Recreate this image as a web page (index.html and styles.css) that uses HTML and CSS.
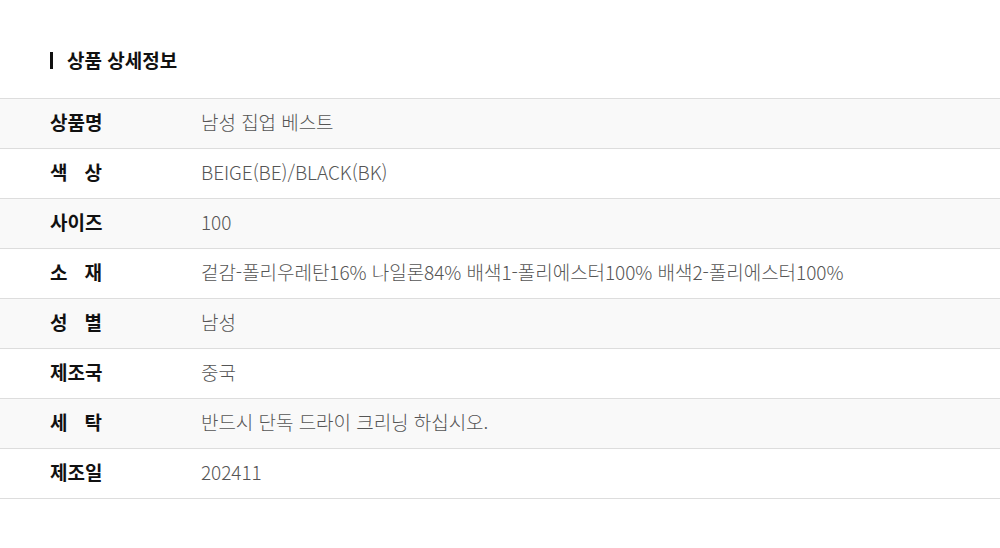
FILE: index.html
```html
<!DOCTYPE html>
<html lang="ko">
<head>
    <meta charset="UTF-8">
    <meta name="viewport" content="width=device-width, initial-scale=1.0">
    <title>상품 상세정보</title>
    <link rel="stylesheet" href="styles.css">
</head>
<body>
    <div class="detail-info">
        <h3 class="tit">상품 상세정보</h3>
        <table class="info-table">
            <tbody>
                <tr><th><span>상품명</span></th><td>남성 집업 베스트</td></tr>
                <tr><th><span>색 상</span></th><td>BEIGE(BE)/BLACK(BK)</td></tr>
                <tr><th><span>사이즈</span></th><td>100</td></tr>
                <tr><th><span>소 재</span></th><td>겉감-폴리우레탄16% 나일론84% 배색1-폴리에스터100% 배색2-폴리에스터100%</td></tr>
                <tr><th><span>성 별</span></th><td>남성</td></tr>
                <tr><th><span>제조국</span></th><td>중국</td></tr>
                <tr><th><span>세 탁</span></th><td>반드시 단독 드라이 크리닝 하십시오.</td></tr>
                <tr><th><span>제조일</span></th><td>202411</td></tr>
            </tbody>
        </table>
    </div>
</body>
</html>
```

FILE: styles.css
```css
*{margin:0;padding:0;box-sizing:border-box;font-family:'Noto Sans CJK KR','Noto Sans',sans-serif;}
body{background:#fff;}
.detail-info{padding-top:46px;}
.tit{display:flex;align-items:center;height:28px;margin:0 0 24px 50px;color:#111;font-size:19px;font-weight:bold;line-height:28px;}
.tit:before{content:'';display:block;width:3px;height:17px;margin-right:14px;background:#111;}
.info-table{width:100%;border-collapse:collapse;border-top:1px solid #ddd;}
.info-table tr{height:50px;border-bottom:1px solid #ddd;}
.info-table tr:nth-child(odd){background:#f9f9f9;}
.info-table th{width:201px;height:49px;padding:0 0 3px 50px;text-align:left;vertical-align:middle;line-height:26px;}
.info-table th span{display:inline-block;width:52px;color:#111;font-size:19px;font-weight:bold;text-align:justify;text-align-last:justify;white-space:nowrap;}
.info-table td{height:49px;padding-bottom:3px;color:#555;font-size:19px;font-weight:300;line-height:26px;letter-spacing:-0.05px;vertical-align:middle;}
```
